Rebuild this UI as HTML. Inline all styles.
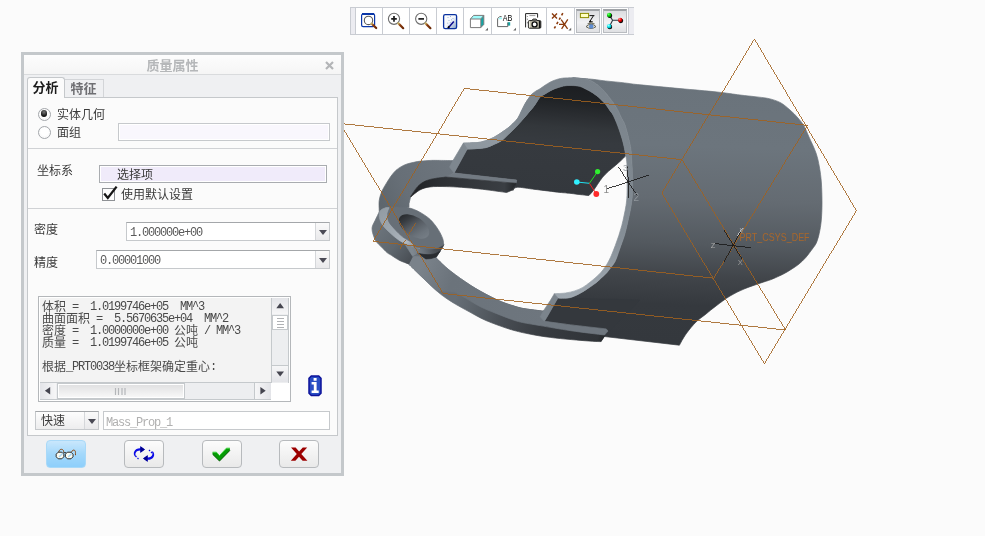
<!DOCTYPE html>
<html lang="zh-CN">
<head>
<meta charset="utf-8">
<title>质量属性</title>
<style>
*{box-sizing:border-box;margin:0;padding:0}
html,body{width:985px;height:536px;overflow:hidden;background:#fbfbfb}
body{position:relative;font-family:"Liberation Sans","Noto Sans CJK SC",sans-serif;font-size:12px;color:#333}
.abs{position:absolute}
#scene{will-change:transform;position:absolute;left:0;top:0;width:985px;height:536px}
/* toolbar */
#tb{will-change:transform;position:absolute;left:350px;top:7px;width:284px;height:28px;background:#fff;border:1px solid #c9ccd2}
#tb .grip{position:absolute;top:0;height:26px;width:5px;background:#ececf1}
#tb .sep{position:absolute;top:0;height:26px;width:1px;background:#c9ccd2}
#tb .on{position:absolute;top:1px;height:24px;width:24px;background:linear-gradient(#dcdde0,#f1f1f3 55%,#dfe0e3);border:1px solid #b9bcc0;border-top:2px solid #9fa2a6}
#tb svg{position:absolute;left:0;top:0}
/* dialog */
#dlg{will-change:transform;position:absolute;left:21px;top:52px;width:323px;height:424px;border:3px solid #c4c8cb;background:#eff0f2}
#ttl{position:absolute;left:0;top:0;width:317px;height:20px;background:linear-gradient(#fdfdfd,#f5f5f5);border-bottom:1px solid #d9dbdd}
#ttl .t{position:absolute;left:0;width:297px;top:1px;text-align:center;font-weight:bold;font-size:13px;line-height:19px;color:#b5b7b9;letter-spacing:0}
.tab{position:absolute;font-weight:bold;font-size:13px;text-align:center}
#tab1{left:3px;top:22px;width:38px;height:21px;border:1px solid #c5c8cb;border-bottom:none;border-radius:3px 3px 0 0;background:#fbfbfb;color:#1c1c1c;line-height:20px;z-index:2}
#tab2{left:40px;top:24px;width:40px;height:19px;border:1px solid #d3d5d8;border-bottom:none;background:#eff0f2;color:#6f6f73;line-height:18px}
#pnl{position:absolute;left:3px;top:42px;width:311px;height:339px;border:1px solid #c5c8cb;background:#fbfbfb}
.lbl{position:absolute;font-size:12px;line-height:14px;color:#3a3a3a;white-space:nowrap}
.hr{position:absolute;left:0;width:309px;height:1px;background:#d0d2d5}
.radio{position:absolute;width:13px;height:13px;border-radius:50%;border:1.4px solid #a4a7ab;background:radial-gradient(circle at 50% 45%,#fff 45%,#e6e7e9);box-shadow:inset 0 0 0 1px rgba(255,255,255,.6)}
.radio.on::after{content:"";position:absolute;left:1.8px;top:1.6px;width:6.6px;height:6.6px;border-radius:50%;background:radial-gradient(circle at 50% 30%,#777,#111 70%)}
.fld{position:absolute;border:1px solid #c6c9cc;background:#f9f7fd;box-shadow:inset 0 0 0 1px #fff}
.combo{position:absolute;border:1px solid #c6c9cc;border-top-color:#a4a7aa;background:#fff;height:19px}
.combo .btn{position:absolute;right:0;top:0;width:14px;height:17px;background:linear-gradient(#fafafa,#e9e9eb);border-left:1px solid #d5d7da}
.combo .btn::after,.tri::after{content:"";position:absolute;left:3px;top:7px;border-left:4px solid transparent;border-right:4px solid transparent;border-top:5px solid #4a4a55}
.num{font-family:"Liberation Mono","Noto Sans CJK SC",monospace;font-size:12px;letter-spacing:-1.2px;color:#5a5a5a}
.ln{position:absolute;left:0;height:14px;line-height:14px;white-space:pre}
.num b{position:relative;top:1px;font-weight:normal;font-family:"Noto Sans CJK SC",sans-serif;font-size:12px;letter-spacing:0}
.sbv{border-left:1px solid #c5c9cc;border-right:1px solid #c5c9cc;background:#edeef0}
.sbh{border-top:1px solid #c5c9cc;border-bottom:1px solid #c5c9cc;background:#edeef0}
.btnb svg{position:absolute;left:-1px;top:-1px}
.btnb{position:absolute;top:385px;width:40px;height:28px;border:1px solid #b7babd;border-radius:4px;background:linear-gradient(#fcfcfc,#e9e9e9)}
</style>
</head>
<body>
<svg id="scene" width="985" height="536" viewBox="0 0 985 536">
<!--M0-->
<defs>
<linearGradient id="gBody" gradientUnits="userSpaceOnUse" x1="700" y1="80" x2="690" y2="345">
<stop offset="0" stop-color="#6a737b"/><stop offset=".25" stop-color="#6c757d"/><stop offset=".45" stop-color="#646b72"/><stop offset=".62" stop-color="#53595f"/><stop offset=".74" stop-color="#41454a"/><stop offset=".85" stop-color="#35393e"/><stop offset="1" stop-color="#34383d"/></linearGradient>
<linearGradient id="gInt" gradientUnits="userSpaceOnUse" x1="560" y1="86" x2="552" y2="195">
<stop offset="0" stop-color="#1d1f22"/><stop offset=".13" stop-color="#202326"/><stop offset=".27" stop-color="#2b2e32"/><stop offset=".38" stop-color="#33373b"/><stop offset=".5" stop-color="#363a3f"/><stop offset="1" stop-color="#34383d"/></linearGradient>
<linearGradient id="gRim" gradientUnits="userSpaceOnUse" x1="560" y1="80" x2="600" y2="300">
<stop offset="0" stop-color="#7a838b"/><stop offset=".5" stop-color="#7f8890"/><stop offset=".75" stop-color="#868f97"/><stop offset=".9" stop-color="#98a1a9"/><stop offset="1" stop-color="#a3acb4"/></linearGradient>
<linearGradient id="gRimL" gradientUnits="userSpaceOnUse" x1="465" y1="150" x2="560" y2="80">
<stop offset="0" stop-color="#8d969e"/><stop offset=".25" stop-color="#9099a1"/><stop offset=".5" stop-color="#7f8890"/><stop offset="1" stop-color="#79828a"/></linearGradient>
<linearGradient id="gBandU" gradientUnits="userSpaceOnUse" x1="380" y1="200" x2="450" y2="165">
<stop offset="0" stop-color="#5e666d"/><stop offset=".35" stop-color="#676f77"/><stop offset="1" stop-color="#6d757d"/></linearGradient>
<linearGradient id="gInnerS" gradientUnits="userSpaceOnUse" x1="410" y1="190" x2="515" y2="190">
<stop offset="0" stop-color="#1f2124"/><stop offset=".3" stop-color="#2d3034"/><stop offset=".9" stop-color="#3a3e43"/><stop offset="1" stop-color="#25282b"/></linearGradient>
<linearGradient id="gBandL" gradientUnits="userSpaceOnUse" x1="420" y1="270" x2="545" y2="320">
<stop offset="0" stop-color="#7a828a"/><stop offset=".25" stop-color="#6b737b"/><stop offset="1" stop-color="#6e767e"/></linearGradient>
<linearGradient id="gBandS" gradientUnits="userSpaceOnUse" x1="455" y1="300" x2="605" y2="340">
<stop offset="0" stop-color="#666e76"/><stop offset=".15" stop-color="#596067"/><stop offset=".35" stop-color="#474c52"/><stop offset=".6" stop-color="#373b40"/><stop offset=".95" stop-color="#303438"/><stop offset="1" stop-color="#232629"/></linearGradient>
<linearGradient id="gHole" gradientUnits="userSpaceOnUse" x1="399" y1="218" x2="429" y2="232">
<stop offset="0" stop-color="#25282b"/><stop offset=".22" stop-color="#363a3f"/><stop offset=".5" stop-color="#565c63"/><stop offset=".8" stop-color="#6c747c"/><stop offset="1" stop-color="#757d85"/></linearGradient>
<linearGradient id="gCres" gradientUnits="userSpaceOnUse" x1="380" y1="212" x2="412" y2="247">
<stop offset="0" stop-color="#939ca4"/><stop offset=".5" stop-color="#a0a9b1"/><stop offset=".85" stop-color="#b0b8c0"/><stop offset="1" stop-color="#8f98a0"/></linearGradient>
<linearGradient id="gLow" gradientUnits="userSpaceOnUse" x1="376" y1="232" x2="412" y2="262">
<stop offset="0" stop-color="#6b737b"/><stop offset=".5" stop-color="#5f676e"/><stop offset="1" stop-color="#474c52"/></linearGradient>
<linearGradient id="gBossS" gradientUnits="userSpaceOnUse" x1="412" y1="250" x2="443" y2="246">
<stop offset="0" stop-color="#7f8890"/><stop offset=".35" stop-color="#6a727a"/><stop offset=".7" stop-color="#4d5258"/><stop offset="1" stop-color="#3d4146"/></linearGradient>

</defs>
<g id="model">
<path d="M572.5 77.7C574.0 77.8 578.4 78.2 581.6 78.4 C584.8 78.7 588.6 78.9 591.8 79.2 C595.0 79.5 598.0 80.0 601.0 80.4 C604.0 80.8 606.8 81.1 610.0 81.4 C613.2 81.7 617.0 82.1 620.2 82.4 C623.4 82.8 626.0 83.1 629.3 83.5 C632.6 83.9 631.5 84.0 640.0 84.8 C648.5 85.6 667.2 87.4 680.0 88.6 C692.8 89.8 707.0 90.9 717.0 92.0 C727.0 93.1 733.7 94.2 740.0 95.0 C746.3 95.8 750.3 96.1 755.0 96.7 C759.7 97.3 763.8 97.5 768.0 98.4 C772.2 99.4 776.3 100.5 780.0 102.4 C783.7 104.3 787.0 107.4 790.0 110.0 C793.0 112.6 795.7 115.3 798.0 118.0 C800.3 120.7 802.2 122.8 804.0 126.0 C805.8 129.2 807.0 132.5 809.0 137.0 C811.0 141.5 814.3 148.0 816.0 153.0 C817.7 158.0 818.5 162.0 819.4 167.0 C820.3 172.0 821.0 177.0 821.4 183.0 C821.8 189.0 822.0 196.7 822.0 203.0 C822.0 209.3 821.7 215.9 821.2 221.0 C820.7 226.1 820.0 229.8 819.2 233.5 C818.4 237.2 817.4 240.4 816.3 243.0 C815.1 245.6 814.0 246.6 812.3 249.0 C810.5 251.4 808.0 255.0 805.8 257.5 C803.6 260.0 801.2 262.1 799.0 264.0 C796.8 265.9 794.5 267.2 792.3 268.7 C790.1 270.1 788.0 271.5 785.8 272.7 C783.6 273.9 781.7 274.9 779.2 276.0 C776.7 277.1 774.2 278.4 771.0 279.6 C767.8 280.8 764.5 281.6 760.0 283.2 C755.5 284.8 749.0 286.9 744.0 289.0 C739.0 291.1 734.7 293.2 730.0 296.0 C725.3 298.8 720.0 303.0 716.0 306.0 C712.0 309.0 709.3 311.3 706.0 314.0 C702.7 316.7 699.3 318.7 696.0 322.0 C692.7 325.3 688.8 330.1 686.0 334.0 C683.2 337.9 680.5 343.3 679.4 345.2L604.3 336.5L601.0 341.6 L557.9 298.0C558.7 298.1 560.4 298.4 562.5 298.3 C564.6 298.2 567.7 298.3 570.6 297.5 C573.5 296.7 576.8 295.0 579.7 293.5 C582.6 292.0 585.2 290.2 587.9 288.4 C590.6 286.6 593.6 284.7 596.0 282.8 C598.4 280.9 600.2 279.0 602.1 277.2 C604.0 275.4 605.7 273.9 607.2 272.2 C608.7 270.5 609.9 268.8 611.2 267.1 C612.5 265.4 613.8 263.9 614.8 262.0 C615.8 260.1 616.4 258.4 617.4 255.6 C618.4 252.8 619.7 248.9 620.9 245.5 C622.1 242.1 623.5 238.7 624.5 235.3 C625.5 231.9 626.2 228.6 627.0 225.2 C627.8 221.8 628.6 218.3 629.3 215.0 C630.0 211.7 630.6 208.9 631.1 205.6 C631.6 202.3 632.1 199.3 632.3 195.0 C632.5 190.7 632.4 185.0 632.4 180.0 C632.4 175.0 632.2 169.1 632.0 165.0 C631.8 160.9 631.6 158.5 631.4 155.6 C631.2 152.7 631.1 150.2 630.7 147.5 C630.3 144.8 629.5 142.1 628.9 139.4 C628.3 136.7 627.7 133.9 626.9 131.2 C626.1 128.5 625.2 125.3 624.3 123.1 C623.4 120.9 622.5 120.1 621.5 118.0 C620.5 115.9 619.6 113.3 618.2 110.7 C616.8 108.1 615.0 105.2 613.1 102.5 C611.2 99.8 609.0 96.9 607.0 94.4 C605.0 92.0 603.2 89.8 601.0 87.8 C598.8 85.8 596.0 83.6 593.8 82.2 C591.6 80.8 588.7 79.7 587.7 79.2L572.5 77.7Z" fill="url(#gBody)" stroke="url(#gBody)" stroke-width=".7" stroke-linejoin="round" />
<path d="M557.9 298.0L544.4 321.3 L606.3 328.9 L607.8 330.5 L604.3 336.5 L640.0 300.0Z" fill="#34383d" stroke="#34383d" stroke-width=".7" stroke-linejoin="round" />
<path d="M467.2 149.1C468.7 149.0 472.8 148.9 476.0 148.6 C479.2 148.3 483.2 148.3 486.3 147.5 C489.4 146.7 492.1 145.2 494.7 144.0 C497.3 142.8 499.6 142.0 501.8 140.4 C504.0 138.8 506.0 136.5 508.0 134.6 C510.0 132.7 512.2 130.8 514.0 129.0 C515.8 127.2 517.3 125.3 519.0 123.5 C520.7 121.7 522.3 119.9 524.0 118.0 C525.7 116.1 527.3 114.0 529.0 112.0 C530.7 110.0 532.7 107.8 534.0 106.0 C535.3 104.2 536.0 103.0 537.0 101.5 C538.0 100.0 538.5 98.3 540.0 97.0 C541.5 95.7 543.8 94.7 546.0 93.4 C548.2 92.1 550.3 90.6 553.2 89.4 C556.1 88.2 560.4 86.8 563.4 86.1 C566.4 85.4 568.8 85.5 571.5 85.5 C574.2 85.5 577.2 85.7 579.6 86.3 C582.0 86.9 583.5 88.0 585.7 89.1 C587.9 90.2 590.6 91.5 592.8 92.9 C595.0 94.3 596.9 95.7 598.9 97.5 C600.9 99.3 603.1 101.4 605.0 103.6 C606.9 105.8 608.6 108.8 610.0 110.7 C611.4 112.6 612.0 112.9 613.1 115.0 C614.2 117.1 615.6 120.4 616.7 123.1 C617.8 125.8 618.8 128.5 619.7 131.2 C620.6 133.9 621.5 136.7 622.3 139.4 C623.1 142.1 623.7 144.8 624.3 147.5 C624.9 150.2 625.5 154.2 625.8 155.6C625.0 156.8 622.5 159.1 620.8 160.7 C619.1 162.3 617.5 163.7 615.5 165.4 C613.5 167.1 610.9 169.1 608.7 171.1 C606.6 173.1 604.5 175.0 602.6 177.2 C600.8 179.4 599.1 182.1 597.6 184.3 C596.1 186.5 595.0 188.5 593.5 190.4 C592.0 192.3 589.7 194.7 588.9 195.5C587.1 195.3 581.6 194.8 578.3 194.4 C575.0 194.0 572.1 193.5 569.1 193.2 C566.1 192.9 565.7 193.0 560.0 192.4 C554.3 191.8 542.1 190.2 535.0 189.4 C527.9 188.6 521.0 187.1 517.3 187.3 C513.6 187.5 513.5 190.1 512.8 190.6L516.7 180.1 L454.1 173.0Z" fill="url(#gInt)" stroke="url(#gInt)" stroke-width=".7" stroke-linejoin="round" />
<path d="M463.4 143.1C464.8 143.1 469.2 143.0 472.0 142.8 C474.8 142.7 477.3 142.8 480.3 142.2 C483.3 141.6 487.1 140.3 489.9 139.2 C492.7 138.1 494.8 136.8 497.0 135.5 C499.2 134.2 501.2 132.8 503.0 131.5 C504.8 130.2 506.3 129.3 508.0 128.0 C509.7 126.7 511.3 125.2 513.0 123.5 C514.7 121.8 516.6 120.1 518.0 118.0 C519.4 115.9 520.3 113.3 521.5 111.0 C522.7 108.7 523.8 106.1 525.0 104.0 C526.2 101.9 527.3 100.2 528.5 98.5 C529.7 96.8 530.8 95.2 532.0 94.0 C533.2 92.8 534.7 91.9 536.0 91.0 C537.3 90.1 538.5 89.8 540.0 88.8 C541.5 87.8 543.3 86.4 545.0 85.3 C546.7 84.2 548.3 83.1 550.0 82.2 C551.7 81.3 553.2 80.7 555.2 80.0 C557.2 79.3 559.4 78.6 562.3 78.2 C565.2 77.8 570.8 77.8 572.5 77.7L587.7 79.2C588.7 79.7 591.6 80.8 593.8 82.2 C596.0 83.6 598.8 85.8 601.0 87.8 C603.2 89.8 605.0 92.0 607.0 94.4 C609.0 96.9 611.2 99.8 613.1 102.5 C615.0 105.2 616.8 108.1 618.2 110.7 C619.6 113.3 620.5 115.9 621.5 118.0 C622.5 120.1 623.4 120.9 624.3 123.1 C625.2 125.3 626.1 128.5 626.9 131.2 C627.7 133.9 628.3 136.7 628.9 139.4 C629.5 142.1 630.3 144.8 630.7 147.5 C631.1 150.2 631.2 152.7 631.4 155.6 C631.6 158.5 631.8 160.9 632.0 165.0 C632.2 169.1 632.4 175.0 632.4 180.0 C632.4 185.0 632.5 190.7 632.3 195.0 C632.1 199.3 631.6 202.3 631.1 205.6 C630.6 208.9 630.0 211.7 629.3 215.0 C628.6 218.3 627.8 221.8 627.0 225.2 C626.2 228.6 625.5 231.9 624.5 235.3 C623.5 238.7 622.1 242.1 620.9 245.5 C619.7 248.9 618.4 252.8 617.4 255.6 C616.4 258.4 615.8 260.1 614.8 262.0 C613.8 263.9 612.5 265.4 611.2 267.1 C609.9 268.8 608.7 270.5 607.2 272.2 C605.7 273.9 604.0 275.4 602.1 277.2 C600.2 279.0 598.4 280.9 596.0 282.8 C593.6 284.7 590.6 286.6 587.9 288.4 C585.2 290.2 582.6 292.0 579.7 293.5 C576.8 295.0 573.5 296.7 570.6 297.5 C567.7 298.3 564.6 298.2 562.5 298.3 C560.4 298.4 558.7 298.1 557.9 298.0L554.4 293.7C556.2 293.6 562.1 293.5 565.5 293.0 C568.9 292.5 571.8 291.8 574.7 290.9 C577.6 290.0 580.3 288.8 582.8 287.4 C585.3 286.0 587.7 284.0 589.9 282.3 C592.1 280.6 594.1 278.9 596.0 277.2 C597.9 275.5 599.6 273.9 601.1 272.2 C602.6 270.5 603.9 268.8 605.1 267.1 C606.3 265.4 607.2 263.9 608.2 262.0 C609.2 260.1 610.1 258.4 611.3 255.6 C612.5 252.8 614.0 248.9 615.3 245.5 C616.6 242.1 617.8 238.7 618.9 235.3 C620.0 231.9 621.0 228.6 621.9 225.2 C622.8 221.8 623.5 218.3 624.2 215.0 C624.9 211.7 625.5 208.8 626.0 205.6 C626.5 202.3 626.8 199.8 627.0 195.5 C627.2 191.2 627.2 185.3 627.2 180.0 C627.2 174.7 627.1 167.8 626.9 163.7 C626.7 159.6 626.2 158.3 625.8 155.6 C625.4 152.9 624.9 150.2 624.3 147.5 C623.7 144.8 623.1 142.1 622.3 139.4 C621.5 136.7 620.6 133.9 619.7 131.2 C618.8 128.5 617.8 125.8 616.7 123.1 C615.6 120.4 614.2 117.1 613.1 115.0 C612.0 112.9 611.4 112.6 610.0 110.7 C608.6 108.8 606.9 105.8 605.0 103.6 C603.1 101.4 600.9 99.3 598.9 97.5 C596.9 95.7 595.0 94.3 592.8 92.9 C590.6 91.5 587.9 90.2 585.7 89.1 C583.5 88.0 582.0 86.9 579.6 86.3 C577.2 85.7 574.2 85.5 571.5 85.5 C568.8 85.5 566.4 85.4 563.4 86.1 C560.4 86.8 556.1 88.2 553.2 89.4 C550.3 90.6 548.2 92.1 546.0 93.4 C543.8 94.7 541.5 95.7 540.0 97.0 C538.5 98.3 538.0 100.0 537.0 101.5 C536.0 103.0 535.3 104.2 534.0 106.0 C532.7 107.8 530.7 110.0 529.0 112.0 C527.3 114.0 525.7 116.1 524.0 118.0 C522.3 119.9 520.7 121.7 519.0 123.5 C517.3 125.3 515.8 127.2 514.0 129.0 C512.2 130.8 510.0 132.7 508.0 134.6 C506.0 136.5 504.0 138.8 501.8 140.4 C499.6 142.0 497.3 142.8 494.7 144.0 C492.1 145.2 489.4 146.7 486.3 147.5 C483.2 148.3 479.2 148.3 476.0 148.6 C472.8 148.9 468.7 149.0 467.2 149.1Z" fill="url(#gRim)" stroke="url(#gRim)" stroke-width=".7" stroke-linejoin="round" />
<path d="M463.4 143.1C464.8 143.1 469.2 143.0 472.0 142.8 C474.8 142.7 477.3 142.8 480.3 142.2 C483.3 141.6 487.1 140.3 489.9 139.2 C492.7 138.1 494.8 136.8 497.0 135.5 C499.2 134.2 501.2 132.8 503.0 131.5 C504.8 130.2 506.3 129.3 508.0 128.0 C509.7 126.7 511.3 125.2 513.0 123.5 C514.7 121.8 516.6 120.1 518.0 118.0 C519.4 115.9 520.3 113.3 521.5 111.0 C522.7 108.7 523.8 106.1 525.0 104.0 C526.2 101.9 527.3 100.2 528.5 98.5 C529.7 96.8 531.4 94.8 532.0 94.0L540.0 97.0C539.5 97.8 538.0 100.0 537.0 101.5 C536.0 103.0 535.3 104.2 534.0 106.0 C532.7 107.8 530.7 110.0 529.0 112.0 C527.3 114.0 525.7 116.1 524.0 118.0 C522.3 119.9 520.7 121.7 519.0 123.5 C517.3 125.3 515.8 127.2 514.0 129.0 C512.2 130.8 510.0 132.7 508.0 134.6 C506.0 136.5 504.0 138.8 501.8 140.4 C499.6 142.0 497.3 142.8 494.7 144.0 C492.1 145.2 489.4 146.7 486.3 147.5 C483.2 148.3 479.2 148.3 476.0 148.6 C472.8 148.9 468.7 149.0 467.2 149.1Z" fill="url(#gRimL)" stroke="url(#gRimL)" stroke-width=".7" stroke-linejoin="round" />
<path d="M404.0 244.0L444.0 244.0 L440.1 251.2 L436.1 257.8 L424.0 277.0 L408.7 264.0 L399.0 258.0Z" fill="#6b737b" stroke="#6b737b" stroke-width=".7" stroke-linejoin="round" />
<path d="M408.7 264.0C410.8 266.1 416.6 271.9 421.2 276.3 C425.8 280.7 432.5 287.1 436.4 290.6 C440.3 294.1 441.6 295.0 444.7 297.2 C447.8 299.4 451.7 301.9 455.2 304.0 C458.7 306.1 462.2 307.9 465.6 309.8 C469.0 311.7 472.4 313.6 475.8 315.4 C479.2 317.2 482.5 319.0 485.9 320.5 C489.3 322.0 492.7 323.2 496.1 324.5 C499.5 325.8 502.8 327.0 506.2 328.1 C509.6 329.2 513.3 330.3 516.4 331.1 C519.5 331.9 521.0 332.3 525.0 333.1 C529.0 333.9 534.4 335.1 540.3 336.0 C546.2 336.9 553.8 337.9 560.6 338.6 C567.4 339.3 575.1 339.9 580.9 340.4 C586.6 340.9 591.8 341.2 595.1 341.4 C598.4 341.6 599.8 341.6 600.7 341.6L604.3 336.5 L607.8 330.5 L606.3 328.9 L544.4 321.3 L543.4 311.2C540.3 310.8 529.5 309.5 525.0 308.8 C520.5 308.1 519.5 307.7 516.4 306.8 C513.3 305.9 509.6 304.8 506.2 303.6 C502.8 302.4 499.5 301.0 496.1 299.4 C492.7 297.8 489.3 296.0 485.9 294.2 C482.5 292.4 479.2 290.6 475.8 288.6 C472.4 286.6 469.0 284.3 465.6 282.0 C462.2 279.7 458.9 277.4 455.5 274.9 C452.1 272.4 448.5 269.6 445.3 266.8 C442.1 264.0 437.6 259.3 436.1 257.8L412.7 256.3Z" fill="url(#gBandS)" stroke="url(#gBandS)" stroke-width=".7" stroke-linejoin="round" />
<path d="M412.7 256.3L436.1 257.8C437.6 259.3 442.1 264.0 445.3 266.8 C448.5 269.6 452.1 272.4 455.5 274.9 C458.9 277.4 462.2 279.7 465.6 282.0 C469.0 284.3 472.4 286.6 475.8 288.6 C479.2 290.6 482.5 292.4 485.9 294.2 C489.3 296.0 492.7 297.8 496.1 299.4 C499.5 301.0 502.8 302.4 506.2 303.6 C509.6 304.8 513.3 305.9 516.4 306.8 C519.5 307.7 520.5 308.1 525.0 308.8 C529.5 309.5 540.3 310.8 543.4 311.2L543.9 310.2 L544.4 321.3 L570.8 324.9 L606.3 328.9 L608.0 331.0 L604.6 335.0C599.0 334.3 581.5 332.3 570.8 330.7 C560.1 329.1 547.9 326.9 540.3 325.6 C532.7 324.3 529.0 323.8 525.0 323.0 C521.0 322.2 519.5 321.9 516.4 321.0 C513.3 320.1 509.6 318.7 506.2 317.4 C502.8 316.1 499.5 314.8 496.1 313.4 C492.7 312.0 489.3 310.8 485.9 309.3 C482.5 307.8 479.2 306.1 475.8 304.2 C472.4 302.3 469.1 300.1 465.6 298.1 C462.1 296.1 456.8 293.0 455.0 292.0L436.4 290.6C433.9 288.2 425.8 280.7 421.2 276.3 C416.6 271.9 410.8 266.1 408.7 264.0Z" fill="url(#gBandL)" stroke="url(#gBandL)" stroke-width=".7" stroke-linejoin="round" />
<path d="M554.4 293.7L557.9 298.0 L553.4 305.7 L548.3 314.8 L544.4 321.3 L540.3 316.8 L543.9 310.2 L550.3 300.6Z" fill="#7b848c" stroke="#7b848c" stroke-width=".7" stroke-linejoin="round" />
<path d="M453.2 160.6C451.0 160.6 443.7 160.4 440.0 160.4 C436.3 160.4 434.2 160.3 431.0 160.4 C427.8 160.5 423.9 160.8 421.0 161.1 C418.1 161.4 416.2 161.8 413.9 162.3 C411.6 162.8 409.1 163.3 407.0 164.0 C404.9 164.7 402.9 165.6 401.1 166.7 C399.3 167.8 397.7 168.8 396.0 170.3 C394.3 171.9 392.7 173.8 391.1 176.0 C389.5 178.2 387.9 180.8 386.3 183.4 C384.8 186.0 383.0 188.6 381.8 191.5 C380.6 194.4 379.6 197.5 379.2 200.6 C378.8 203.7 379.2 208.4 379.2 210.0L379.4 215.0 L388.0 214.0 L409.0 207.2 L409.0 203.7 L410.7 196.5C411.9 194.8 415.3 189.0 417.8 186.4 C420.3 183.8 422.9 182.2 425.9 180.8 C428.9 179.5 432.6 178.9 436.0 178.3 C439.4 177.7 443.2 178.1 446.2 177.2 C449.2 176.3 452.8 173.7 454.1 173.0L454.1 173.0 L453.2 160.6Z" fill="url(#gBandU)" stroke="url(#gBandU)" stroke-width=".7" stroke-linejoin="round" />
<path d="M463.4 143.1L467.2 149.1 L454.1 173.0 L449.6 167.0 L452.9 160.7Z" fill="#7e878f" stroke="#7e878f" stroke-width=".7" stroke-linejoin="round" />
<path d="M445.7 177.0L454.1 173.0 L516.7 180.1 L516.1 183.3Z" fill="#727a82" stroke="#727a82" stroke-width=".7" stroke-linejoin="round" />
<path d="M410.7 197.0C412.2 195.8 416.6 191.7 419.8 190.0 C423.0 188.3 425.6 187.5 430.0 186.9 C434.4 186.3 441.0 186.5 446.2 186.6 C451.4 186.7 455.2 186.9 461.3 187.3 C467.4 187.8 475.1 188.4 482.7 189.3 C490.2 190.2 502.6 192.0 506.6 192.5L512.6 189.9 L516.1 183.3 L445.7 177.0C444.5 177.4 439.4 177.7 436.0 178.3 C432.6 178.9 428.9 179.5 425.9 180.8 C422.9 182.2 420.3 183.8 417.8 186.4 C415.3 189.0 411.9 194.8 410.7 196.5Z" fill="url(#gInnerS)" stroke="url(#gInnerS)" stroke-width=".7" stroke-linejoin="round" />
<path d="M379.2 212.0C378.5 213.4 376.4 217.7 375.2 220.3 C374.0 222.9 372.5 225.0 372.1 227.4 C371.8 229.8 372.4 232.1 373.1 234.5 C373.8 236.9 374.9 239.6 376.2 241.6 C377.5 243.6 379.3 244.8 381.2 246.7 C383.1 248.6 385.6 251.4 387.3 252.8 C389.0 254.2 389.4 254.0 391.4 255.3 C393.4 256.6 396.6 258.9 399.5 260.4 C402.4 261.8 407.2 263.4 408.7 264.0L412.7 256.3 L417.8 253.3 L400.0 236.0 L384.0 213.0Z" fill="url(#gLow)" stroke="url(#gLow)" stroke-width=".7" stroke-linejoin="round" />
<path d="M405.6 245.2L413.7 246.7C415.7 247.0 422.2 248.4 425.9 248.7 C429.6 248.9 433.0 248.9 436.0 248.2 C439.0 247.5 442.4 245.3 443.7 244.7L443.2 246.2 L440.1 251.2 L436.1 256.3 L425.9 258.9 L417.8 253.3 L412.7 256.3Z" fill="url(#gBossS)" stroke="url(#gBossS)" stroke-width=".7" stroke-linejoin="round" />
<path d="M417.8 253.3C419.2 253.5 423.3 254.5 426.0 254.6 C428.7 254.7 431.6 254.6 434.0 254.0 C436.4 253.4 439.1 251.7 440.1 251.2L436.1 257.0 L431.0 258.6 L425.9 258.9Z" fill="#2a2d31" stroke="#2a2d31" stroke-width=".7" stroke-linejoin="round" />
<path d="M386.0 207.6C385.1 208.1 381.5 209.0 380.4 210.6 C379.3 212.2 379.0 215.0 379.4 217.4 C379.8 219.8 380.8 222.4 382.6 225.0 C384.4 227.6 387.3 230.3 390.0 232.8 C392.7 235.3 396.0 238.2 399.0 240.2 C402.0 242.2 405.4 243.7 408.0 244.8 C410.6 245.9 412.3 246.4 414.3 247.0 C416.3 247.6 419.1 248.2 420.0 248.4C419.3 247.8 417.4 246.2 415.7 245.0 C414.0 243.8 412.0 242.7 409.8 241.3 C407.6 239.9 404.8 238.6 402.3 236.6 C399.8 234.6 397.1 231.8 394.9 229.3 C392.7 226.9 390.2 224.4 389.0 221.9 C387.8 219.4 387.4 216.8 387.6 214.4 C387.8 212.0 389.6 208.6 390.0 207.4Z" fill="url(#gCres)" stroke="url(#gCres)" stroke-width=".7" stroke-linejoin="round" />
<path d="M389.4 207.6C389.7 207.5 389.6 207.2 391.4 207.1 C393.2 207.0 396.9 207.0 400.0 207.2 C403.1 207.4 406.4 207.3 409.7 208.1 C413.0 208.9 416.4 210.3 419.8 212.2 C423.2 214.1 426.9 216.4 430.0 219.3 C433.1 222.2 436.0 226.2 438.1 229.4 C440.2 232.6 441.8 236.1 442.7 238.6 C443.6 241.1 443.5 243.7 443.7 244.7C442.4 245.3 439.0 247.5 436.0 248.2 C433.0 248.9 429.6 248.9 425.9 248.7 C422.2 248.4 415.7 247.0 413.7 246.7C414.7 244.4 412.0 242.7 409.8 241.3 C407.6 239.9 404.8 238.6 402.3 236.6 C399.8 234.6 397.1 231.8 394.9 229.3 C392.7 226.9 390.2 224.4 389.0 221.9 C387.8 219.4 387.4 216.8 387.6 214.4 C387.8 212.0 389.6 208.6 390.0 207.4Z" fill="#676f77" stroke="#676f77" stroke-width=".7" stroke-linejoin="round" />
<ellipse cx="414" cy="226.4" rx="17" ry="9.6" transform="rotate(33 414 226.4)" fill="url(#gHole)"/>
</g>
<g id="ovl">
<path d="M373.0 241.3 L464.4 88.4 L807.6 125.4 L713.6 278.2 L373.0 241.3" fill="none" stroke="#a1621f" stroke-width="0.85" shape-rendering="crispEdges" />
<path d="M443.2 293.5 L340.6 123.5 L682.0 159.6 L785.6 330.0 L443.2 293.5" fill="none" stroke="#a1621f" stroke-width="0.85" shape-rendering="crispEdges" />
<path d="M754.4 39.0 L856.4 210.6 L764.4 363.6 L661.8 193.0 L754.4 39.0" fill="none" stroke="#a1621f" stroke-width="0.85" shape-rendering="crispEdges" />
<path d="M415.8 222.8 L408.2 235.4" fill="none" stroke="#a1621f" stroke-width="0.85" shape-rendering="crispEdges" />
<path d="M405.6 239.6 L400.0 248.7" fill="none" stroke="#a1621f" stroke-width="0.85" shape-rendering="crispEdges" />
<path d="M589.4 183.3 L597.6 171.6" stroke="#20e020" stroke-width="1" fill="none"/>
<path d="M589.4 183.3 L576.8 182" stroke="#20e0f0" stroke-width="1" fill="none"/>
<path d="M589.4 183.3 L596.3 194" stroke="#f02020" stroke-width="1" fill="none"/>
<circle cx="597.6" cy="171.6" r="2.6" fill="#30f030"/>
<circle cx="576.8" cy="182" r="2.8" fill="#30f0ff"/>
<circle cx="596.3" cy="194" r="2.9" fill="#ff2a2a"/>
<path d="M606.7 188.9 L648.8 175.2" fill="none" stroke="#1a1a1a" stroke-width="0.85" shape-rendering="crispEdges" />
<path d="M618.4 167.0 L637.2 195.5" fill="none" stroke="#1a1a1a" stroke-width="0.85" shape-rendering="crispEdges" />
<path d="M627.8 166.0 L628.4 197.5" fill="none" stroke="#1a1a1a" stroke-width="0.85" shape-rendering="crispEdges" />
<text x="603.6" y="193" font-family="'Liberation Sans',sans-serif" font-size="10" fill="#8a8a8a">1</text>
<text x="623" y="170.5" font-family="'Liberation Sans',sans-serif" font-size="9" fill="#9aa0a6">3</text>
<text x="633.6" y="201.2" font-family="'Liberation Sans',sans-serif" font-size="10" fill="#8f959b">2</text>
<path d="M715.0 243.6 L750.6 247.7" fill="none" stroke="#1a1a1a" stroke-width="0.85" shape-rendering="crispEdges" />
<path d="M724.1 230.4 L742.0 259.0" fill="none" stroke="#1a1a1a" stroke-width="0.85" shape-rendering="crispEdges" />
<path d="M742.4 228.3 L724.0 262.0" fill="none" stroke="#1a1a1a" stroke-width="0.85" shape-rendering="crispEdges" />
<path d="M737.0 236.0 L742.4 228.3" fill="none" stroke="#c8ccd0" stroke-width="0.85" shape-rendering="crispEdges" />
<text x="710.8" y="248.2" font-family="'Liberation Sans',sans-serif" font-size="7.5" fill="#a9a9a9">Z</text>
<text x="737.8" y="264.8" font-family="'Liberation Sans',sans-serif" font-size="7.5" fill="#9a9a9a">X</text>
<text x="739.4" y="232.6" font-family="'Liberation Sans',sans-serif" font-size="7" fill="#a8acb0">Y</text>
<text x="739.6" y="241.4" font-family="'Liberation Sans',sans-serif" font-size="11" fill="#a8672c" textLength="70" lengthAdjust="spacingAndGlyphs">PRT_CSYS_DEF</text>
</g>
<!--M1-->
</svg>

<div id="tb">
<div class="grip" style="left:0"></div><div class="grip" style="left:278px"></div>
<div class="sep" style="left:4px"></div><div class="sep" style="left:31px"></div><div class="sep" style="left:58px"></div><div class="sep" style="left:85px"></div><div class="sep" style="left:112px"></div><div class="sep" style="left:140px"></div><div class="sep" style="left:168px"></div><div class="sep" style="left:195px"></div><div class="sep" style="left:223px"></div><div class="sep" style="left:250px"></div><div class="sep" style="left:277px"></div>
<div class="on" style="left:225px"></div><div class="on" style="left:252px"></div>
<svg width="282" height="26" viewBox="351 8 282 26">
<defs>
<linearGradient id="hnd" x1="0" y1="0" x2="1" y2="1"><stop offset="0" stop-color="#c8b060"/><stop offset=".35" stop-color="#8a3a0c"/><stop offset="1" stop-color="#6a2806"/></linearGradient>
<linearGradient id="rp" x1="0" y1="0" x2="1" y2="1"><stop offset="0" stop-color="#fff"/><stop offset=".5" stop-color="#f4f7fb"/><stop offset="1" stop-color="#7f9cc4"/></linearGradient>
<radialGradient id="bg" cx=".35" cy=".3" r=".8"><stop offset="0" stop-color="#7dff7d"/><stop offset=".5" stop-color="#00d800"/><stop offset="1" stop-color="#006000"/></radialGradient>
<radialGradient id="bc" cx=".35" cy=".3" r=".8"><stop offset="0" stop-color="#b0ffff"/><stop offset=".5" stop-color="#00e8f0"/><stop offset="1" stop-color="#007080"/></radialGradient>
<radialGradient id="br" cx=".35" cy=".3" r=".8"><stop offset="0" stop-color="#ff9090"/><stop offset=".5" stop-color="#f00000"/><stop offset="1" stop-color="#700000"/></radialGradient>
</defs>
<!-- 1 refit -->
<rect x="361.6" y="14" width="13" height="12.6" rx="1.6" fill="#fff" stroke="#0a36a8" stroke-width="1.2"/><path d="M362 14 H374.2" stroke="#0a36a8" stroke-width="2"/>
<circle cx="368.5" cy="20.4" r="4.2" fill="#fff" stroke="#5a5a5a" stroke-width="1.1"/>
<path d="M371.6 23.6 L376.2 28" stroke="url(#hnd)" stroke-width="2.2" stroke-linecap="round"/>
<!-- 2 zoom in -->
<circle cx="394" cy="18.8" r="5.6" fill="#fff" stroke="#6e6e6e" stroke-width="1.1"/>
<path d="M391.2 18.9 H396.8 M394 16 V21.7" stroke="#1c1c1c" stroke-width="1.7"/>
<path d="M398.4 23.4 L403.2 28.2" stroke="url(#hnd)" stroke-width="2.2" stroke-linecap="round"/>
<!-- 3 zoom out -->
<circle cx="421.2" cy="18.8" r="5.6" fill="#fff" stroke="#6e6e6e" stroke-width="1.1"/>
<path d="M418.4 18.9 H424" stroke="#1c1c1c" stroke-width="1.7"/>
<path d="M425.6 23.4 L430.4 28.2" stroke="url(#hnd)" stroke-width="2.2" stroke-linecap="round"/>
<!-- 4 repaint -->
<rect x="443.6" y="14.6" width="13" height="14" rx="1.6" fill="url(#rp)" stroke="#0a32a0" stroke-width="1.3"/>
<path d="M448.6 27.6 L453.8 21.4" stroke="#0a0a90" stroke-width="1.5"/><path d="M447.8 28 L449.4 26.4" stroke="#000" stroke-width="1.6"/>
<path d="M447.5 17.5h1M450 16.5h1M452.5 18.5h1M448.5 20.5h1M451 19.8h1M447.2 23.2h1M449.8 22.6h1" stroke="#9fb6dc" stroke-width="1"/>
<!-- 5 cube -->
<path d="M470.4 19 L473.6 15.4 H483.8 L480.8 19 Z" fill="#9ffcfc"/><path d="M480.8 19 L483.8 15.4 V24.4 L480.8 27.6 Z" fill="#12a6a6"/>
<rect x="470.4" y="19" width="10.4" height="8.6" fill="#fff"/>
<path d="M470.4 19 L473.6 15.4 H483.8 V24.4 L480.8 27.6 H470.4 Z M470.4 19 H480.8 V27.6 M480.8 19 L483.8 15.4" fill="none" stroke="#7a7a7a" stroke-width="1"/>
<path d="M485.2 30.6 L488 27.8 V30.6 Z" fill="#666"/>
<!-- 6 AB -->
<path d="M498 19.2 L499.6 17.4 H502 V19.2 Z" fill="#9ffcfc"/><rect x="507.6" y="22.2" width="2.6" height="3.4" fill="#12a6a6"/>
<path d="M501.6 16.6 H499.6 L497.6 18.6 V26.6 H507.8 V22.6" fill="none" stroke="#666" stroke-width="1"/>
<text x="502.8" y="20.8" font-family="'Liberation Sans',sans-serif" font-size="9.2" fill="#000" textLength="9.6" lengthAdjust="spacingAndGlyphs">AB</text>
<path d="M513.2 30.6 L516 27.8 V30.6 Z" fill="#666"/>
<!-- 7 camera -->
<path d="M525.6 27.4 V13.6 H537.6 V17.6" fill="none" stroke="#222" stroke-width="1"/><path d="M527.4 16 v1 M527.4 18.6 v1.4 M527.4 22 v1.4 M529.4 15.6 h6" stroke="#9a9a9a" stroke-width="1"/>
<rect x="528.4" y="20.6" width="12.4" height="7.6" rx="1" fill="#c9c5b2" stroke="#1a1a1a" stroke-width="1"/><path d="M532 20.4 L533 19 H536.2 L537.2 20.4" fill="#8a8a80" stroke="#1a1a1a" stroke-width=".8"/>
<path d="M539.6 21 v7" stroke="#111" stroke-width="1.6"/><path d="M529.4 21.4 v6" stroke="#f3f1e6" stroke-width="1"/>
<circle cx="534.6" cy="24.4" r="2.5" fill="#fff" stroke="#111" stroke-width="1.4"/>
<!-- 8 datum display -->
<path d="M552 13.6 L557 18.6 M557 13.6 L552 18.6" stroke="#8a3a0c" stroke-width="1.4"/>
<path d="M562.8 13.2 L554.2 28.6" stroke="#8a3a0c" stroke-width="1.6" stroke-dasharray="2.4 2.6"/>
<path d="M561.2 19.6 L567.6 28.8 M567.8 19.4 L561.6 28.8 M559 24.4 H565" stroke="#8a3a0c" stroke-width="1.3"/>
<path d="M568.4 30.6 L571.2 27.8 V30.6 Z" fill="#666"/>
<!-- 9 annotation display -->
<rect x="580.4" y="13.4" width="8.2" height="4.2" fill="#ffffc4" stroke="#8e8e00" stroke-width="1"/>
<path d="M589.4 15.6 H594.4 M593.4 15.8 L589.6 21.8 H592.8" fill="none" stroke="#111" stroke-width="1"/><path d="M588.8 22.4 L590.4 19.8 L591.6 22.2 Z" fill="#111"/>
<path d="M586 26.6 Q591 22 596 26.6 Q591 30.4 586 26.6 Z" fill="#e8e8e0" stroke="#55554a" stroke-width=".9"/>
<circle cx="591.2" cy="26.4" r="2.2" fill="#5f8ed4"/><path d="M587.6 24 Q591 22.4 594.6 24" stroke="#777766" stroke-width="1.2" fill="none"/>
<!-- 10 spin center -->
<path d="M610.2 16.6 L612.6 20.3 L610.2 25 M612.6 20.3 H618.6" fill="none" stroke="#2c3640" stroke-width="1.1"/>
<circle cx="609.8" cy="15.7" r="2.4" fill="#0a0a0a"/><circle cx="609.2" cy="15" r="2.2" fill="url(#bg)"/>
<circle cx="609.8" cy="26.9" r="2.4" fill="#0a0a0a"/><circle cx="609.2" cy="26.2" r="2.2" fill="url(#bc)"/>
<circle cx="620.8" cy="20.8" r="2.4" fill="#0a0a0a"/><circle cx="620.2" cy="20" r="2.2" fill="url(#br)"/>
</svg>
</div>

<div id="dlg">
  <div id="ttl"><div class="t">质量属性</div>
    <svg class="abs" style="left:301px;top:6px" width="9" height="9" viewBox="0 0 9 9"><path d="M1 1 L8 8 M8 1 L1 8" stroke="#b3b5b7" stroke-width="2.2" fill="none"/></svg>
  </div>
  <div class="tab" id="tab1" style="padding-right:1px">分析</div>
  <div class="tab" id="tab2" style="padding-right:1px">特征</div>
  <div id="pnl">
    <div class="radio on" style="left:10px;top:9.5px"></div>
    <div class="lbl" style="left:29px;top:10px">实体几何</div>
    <div class="radio" style="left:10px;top:27.5px"></div>
    <div class="lbl" style="left:29px;top:28px">面组</div>
    <div class="fld" style="left:90px;top:25px;width:212px;height:18px"></div>
    <div class="hr" style="top:50px"></div>

    <div class="lbl" style="left:9px;top:66px">坐标系</div>
    <div class="fld" style="left:71px;top:67px;width:228px;height:18px;background:#f0ebfa;border-color:#a9acb0"></div>
    <div class="lbl" style="left:89px;top:70px">选择项</div>
    <div class="abs" style="left:74px;top:90px;width:13px;height:13px;border:1px solid #8e9195;background:#fdfdfd"></div>
    <svg class="abs" style="left:73px;top:87px" width="18" height="17" viewBox="0 0 18 17"><path d="M3.2 8.6 L6.8 13 L15.6 1.6" stroke="#161616" stroke-width="2.3" fill="none" stroke-linejoin="miter"/></svg>
    <div class="lbl" style="left:93px;top:90px">使用默认设置</div>
    <div class="hr" style="top:110px"></div>

    <div class="lbl" style="left:6px;top:125px">密度</div>
    <div class="combo" style="left:98px;top:124px;width:204px"><span class="lbl num" style="left:3px;top:3px">1.000000e+00</span><div class="btn"></div></div>
    <div class="lbl" style="left:6px;top:158px">精度</div>
    <div class="combo" style="left:68px;top:152px;width:234px"><span class="lbl num" style="left:3px;top:3px">0.00001000</span><div class="btn"></div></div>

    <div id="ta" class="abs" style="left:10px;top:198px;width:253px;height:106px;border:1px solid #b4b7ba;background:#f3f3f3">
      <div class="abs num" id="txt" style="left:3px;top:1px;color:#4a4a4a"><div class="ln" style="top:0px"><b>体积</b> =  1.0199746e+05  MM^3</div><div class="ln" style="top:12px"><b>曲面面积</b> =  5.5670635e+04  MM^2</div><div class="ln" style="top:24px"><b>密度</b> =  1.0000000e+00 <b>公吨</b> / MM^3</div><div class="ln" style="top:36px"><b>质量</b> =  1.0199746e+05 <b>公吨</b></div><div class="ln" style="top:60px"><b>根据</b>_PRT0038<b>坐标框架确定重心</b>:</div></div>
      <div class="abs" style="left:0;top:0;width:251px;height:104px;border:1px solid #fff;pointer-events:none"></div>
      <div class="abs sbv" style="left:232px;top:1px;width:18px;height:85px">
        <div class="abs sbb" style="left:0;top:0;width:16px;height:16px;background:linear-gradient(#e3e4e8,#f6f6f7)"><svg width="16" height="16" viewBox="0 0 16 16"><path d="M4.3 10.2 L12 10.2 L8.15 4.9 Z" fill="#45454f"/></svg></div>
        <div class="abs" style="left:0;top:17px;width:16px;height:15px;border:1px solid #c5c9cc;background:#fff;box-shadow:inset 0 0 0 1px #fff"><svg class="abs" style="left:0;top:0" width="14" height="13" viewBox="0 0 14 13"><path d="M4 2.5h7M4 5.5h7M4 8.5h7M4 11.5h7" stroke="#b0b2b5" stroke-width="1" fill="none"/></svg></div>
        <div class="abs sbb" style="left:0;top:67px;width:16px;height:17px;border-top:1px solid #c5c9cc;background:linear-gradient(#f6f6f7,#e3e4e8)"><svg width="16" height="16" viewBox="0 0 16 16"><path d="M4.3 5.4 L12 5.4 L8.15 10.6 Z" fill="#45454f"/></svg></div>
      </div>
      <div class="abs sbh" style="left:1px;top:85px;width:232px;height:18px">
        <div class="abs" style="left:0;top:0;width:16px;height:16px;background:linear-gradient(90deg,#e3e4e8,#f6f6f7)"><svg width="16" height="16" viewBox="0 0 16 16"><path d="M10.2 3.9 L10.2 11.4 L4.9 7.65 Z" fill="#45454f"/></svg></div>
        <div class="abs" style="left:17px;top:0;width:128px;height:16px;border:1px solid #c5c9cc;background:linear-gradient(#dfdfe0,#f9f9f9);box-shadow:inset 0 0 0 1px #fff"><svg class="abs" style="left:56px;top:3px" width="14" height="9" viewBox="0 0 14 9"><path d="M1.5 1v7M4.5 1v7M8 1v7M11 1v7" stroke="#b4b6b9" stroke-width="1.2" fill="none"/></svg></div>
        <div class="abs" style="left:214px;top:0;width:17px;height:16px;border-left:1px solid #c5c9cc;background:linear-gradient(90deg,#f6f6f7,#e3e4e8)"><svg width="16" height="16" viewBox="0 0 16 16"><path d="M5.4 3.9 L5.4 11.4 L10.7 7.65 Z" fill="#45454f"/></svg></div>
      </div>
      <div class="abs" style="left:232px;top:86px;width:18px;height:17px;background:#fff"></div>
    </div>
    <svg class="abs" style="left:280px;top:277.4px" width="15" height="22" viewBox="0 0 15 22"><path d="M3.3 1 H10.7 L13 3.3 V18.3 L10.7 20.6 H3.3 L1 18.3 V3.3 Z" fill="#2a4fc4" stroke="#0d129a" stroke-width="1.5"/><path d="M5.6 3h3v2.8h-3z M3.6 7h5v8.6h2.1v2.4h-7.1v-2.4h2.2v-6.2h-2.2z" fill="#fff"/></svg>
    <div class="combo" style="left:7px;top:313px;width:64px;background:linear-gradient(#fdfdfd,#ededee)"><span class="lbl" style="left:5px;top:2px">快速</span><div class="btn"></div></div>
    <div class="abs" style="left:75px;top:313px;width:227px;height:19px;border:1px solid #c6c9cc;background:#fff"><span class="lbl num" style="left:2px;top:3.5px;color:#b0b0b0">Mass_Prop_1</span></div>
  </div>
  <div class="btnb" style="left:22px;background:linear-gradient(#c9e7fc,#a3d8fb 50%,#8ecffb);border-color:#a9d9f8"><svg width="40" height="28" viewBox="0 0 40 28">
<path d="M12.6 12.3 C13 9.6 15.2 8.8 16.6 9.6 C17.7 10.3 17.6 11.6 17.8 12.6" fill="none" stroke="#8c4a14" stroke-width="1"/>
<path d="M25.4 12.3 C26 10.4 27.6 9.6 28.6 10.3 C29.8 11.2 29.4 13.2 29.5 15.2" fill="none" stroke="#8c4a14" stroke-width="1"/>
<path d="M17.6 12.7 H20.2" stroke="#2a2a2a" stroke-width="1" fill="none"/>
<path d="M12.2 12.2 h3.6 l2 2 v2.6 l-2 2 h-3.6 l-2 -2 v-2.6 z" fill="#fbfbf0" stroke="#2a2a2a" stroke-width="1"/>
<path d="M21.4 12.2 h3.6 l2 2 v2.6 l-2 2 h-3.6 l-2 -2 v-2.6 z" fill="#fbfbf0" stroke="#2a2a2a" stroke-width="1"/>
<path d="M13 17 l3.5 -3.5" stroke="#a8d8f8" stroke-width="1.4"/><path d="M22.2 17 l3.5 -3.5" stroke="#a8d8f8" stroke-width="1.4"/>
</svg></div>
  <div class="btnb" style="left:100px"><svg width="40" height="28" viewBox="0 0 40 28">
<path d="M12.2 16.4 C10.2 13.6 12.4 10.4 16.4 10.6 L16.4 12.8 L20.9 9.4 L16.4 6.2 L16.4 8.2 C10.6 8 8.2 13.2 11 16.6 Z" fill="#0a0ae6"/>
<path d="M16.4 8.2 L16.4 6.2 L20.9 9.4 L16.4 12.8 Z" fill="#00008c"/>
<path d="M27.6 11.4 C29.8 14.2 27.6 17.6 23.6 17.4 L23.6 15.2 L19.1 18.6 L23.6 21.8 L23.6 19.8 C29.4 20 31.8 14.8 29 11.4 Z" fill="#0a0ae6"/>
<path d="M23.6 19.8 L23.6 21.8 L19.1 18.6 L23.6 15.2 Z" fill="#00008c"/>
<path d="M11.5 16 l1 1 M13.5 18 l1 1 M25 10 l1 1 M27 12 l1 1" stroke="#0a0ae6" stroke-width="1.2"/>
</svg></div>
  <div class="btnb" style="left:178px"><svg width="40" height="28" viewBox="0 0 40 28">
<path d="M10.6 12.2 H14.4 L17.5 15.6 L24.4 8.2 H27.9 V10.4 L17.5 21 L10.6 14.2 Z" fill="#069c06"/>
<path d="M10.6 12.2 H14.4 L17.5 15.6 L24.4 8.2 H27.9" fill="none" stroke="#3fd43f" stroke-width="1"/>
<path d="M27.9 10.4 L17.5 21 L10.6 14.2" fill="none" stroke="#055a05" stroke-width="1"/>
</svg></div>
  <div class="btnb" style="left:255px"><svg width="40" height="28" viewBox="0 0 40 28">
<path d="M12 7.6 H16.6 L20.1 11.6 L23.8 7.6 H28.2 L22.3 14.1 L28.4 20.8 H23.6 L20 16.8 L16.4 20.8 H11.8 L17.8 14.1 Z" fill="#9c0000"/>
</svg></div>
</div>
</body>
</html>
